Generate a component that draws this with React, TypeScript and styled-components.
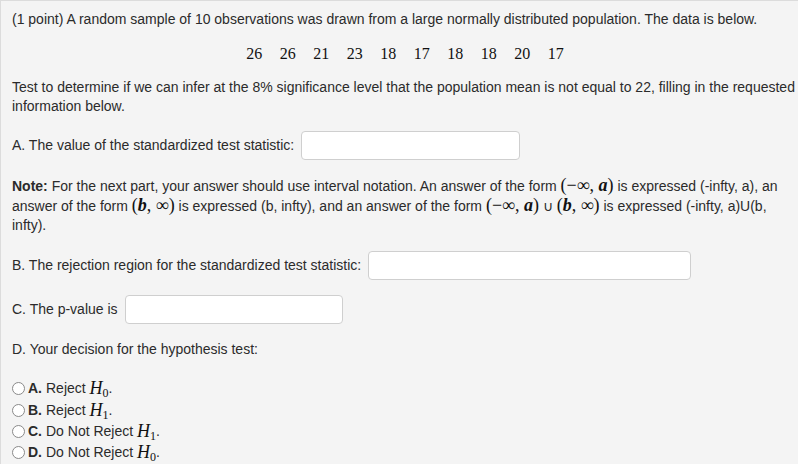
import styled, { createGlobalStyle } from "styled-components";

const GlobalStyle = createGlobalStyle`
  html, body {
    margin: 0;
    padding: 0;
    background: #f4f4f4;
  }
`;

const Panel = styled.div`
  box-sizing: border-box;
  height: 464px;
  overflow: hidden;
  background: #f4f4f4;
  border-top: 1px solid #dcdcdc;
  border-left: 1px solid #dcdcdc;
  padding: 9px 0 0 11px;
  font-family: "Liberation Sans", Arial, sans-serif;
  font-size: 14px;
  line-height: 19px;
  color: #2b2b2b;
`;

const Para = styled.p<{ $gap: number }>`
  margin: ${(p) => p.$gap}px 0 0 0;
`;

const DataLine = styled.div`
  margin-top: 13px;
  display: flex;
  justify-content: center;
  gap: 17.5px;
  font-family: "Liberation Serif", "DejaVu Serif", serif;
  font-size: 16px;
  line-height: 24px;
  color: #111;
`;

const Row = styled.div<{ $gap: number }>`
  margin-top: ${(p) => p.$gap}px;
  display: flex;
  align-items: center;
  gap: 7px;
`;

const Field = styled.input<{ $w: number }>`
  box-sizing: border-box;
  width: ${(p) => p.$w}px;
  height: 29px;
  border: 1px solid #cfcfcf;
  border-radius: 4px;
  background: #fff;
  margin: 0;
  padding: 4px 6px;
  font: inherit;
`;

const Math = styled.span<{ $italic?: boolean }>`
  font-family: "Liberation Serif", "DejaVu Serif", serif;
  font-size: 18px;
  color: #111;
  font-style: ${(p) => (p.$italic ? "italic" : "normal")};
`;

const Var = styled.i`
  font-weight: bold;
  font-style: italic;
`;

const Sub = styled.sub`
  font-size: 12px;
  font-style: normal;
  vertical-align: -3px;
  line-height: 0;
`;

const Choices = styled.div`
  margin-top: 19px;
  display: flex;
  flex-direction: column;
`;

const Choice = styled.label`
  display: flex;
  align-items: center;
  height: 21.4px;
`;

const Radio = styled.span`
  box-sizing: border-box;
  width: 13px;
  height: 13px;
  border: 1px solid #8a8a8a;
  border-radius: 50%;
  background: #fff;
  margin-right: 3px;
  flex-shrink: 0;
`;

const Key = styled.b`
  margin-right: 4px;
`;

const H = ({ n }: { n: number }) => (
  <Math $italic>
    H<Sub>{n}</Sub>
  </Math>
);

const data = [26, 26, 21, 23, 18, 17, 18, 18, 20, 17];

const choices = [
  { key: "A.", text: "Reject", n: 0 },
  { key: "B.", text: "Reject", n: 1 },
  { key: "C.", text: "Do Not Reject", n: 1 },
  { key: "D.", text: "Do Not Reject", n: 0 },
];

const NegInfA = () => (
  <Math>
    (−∞, <Var>a</Var>)
  </Math>
);

const BInf = () => (
  <Math>
    (<Var>b</Var>, ∞)
  </Math>
);

export default function App() {
  return (
    <>
      <GlobalStyle />
      <Panel>
        <Para $gap={0}>
          (1 point) A random sample of 10 observations was drawn from a large normally distributed
          population. The data is below.
        </Para>
        <DataLine>
          {data.map((d, i) => (
            <span key={i}>{d}</span>
          ))}
        </DataLine>
        <Para $gap={12}>
          Test to determine if we can infer at the 8% significance level that the population mean
          is not equal to 22, filling in the requested information below.
        </Para>
        <Row $gap={15}>
          <span>A. The value of the standardized test statistic:</span>
          <Field $w={219} />
        </Row>
        <Para $gap={16}>
          <b>Note:</b> For the next part, your answer should use interval notation. An answer of the
          form <NegInfA /> is expressed (-infty, a), an answer of the form <BInf /> is expressed (b,
          infty), and an answer of the form <NegInfA /> ∪ <BInf /> is expressed (-infty, a)U(b,
          infty).
        </Para>
        <Row $gap={16}>
          <span>B. The rejection region for the standardized test statistic:</span>
          <Field $w={323} />
        </Row>
        <Row $gap={15}>
          <span>C. The p-value is</span>
          <Field $w={218} />
        </Row>
        <Para $gap={16}>D. Your decision for the hypothesis test:</Para>
        <Choices>
          {choices.map((c) => (
            <Choice key={c.key}>
              <Radio />
              <Key>{c.key}</Key>
              {c.text}&nbsp;
              <H n={c.n} />.
            </Choice>
          ))}
        </Choices>
      </Panel>
    </>
  );
}
